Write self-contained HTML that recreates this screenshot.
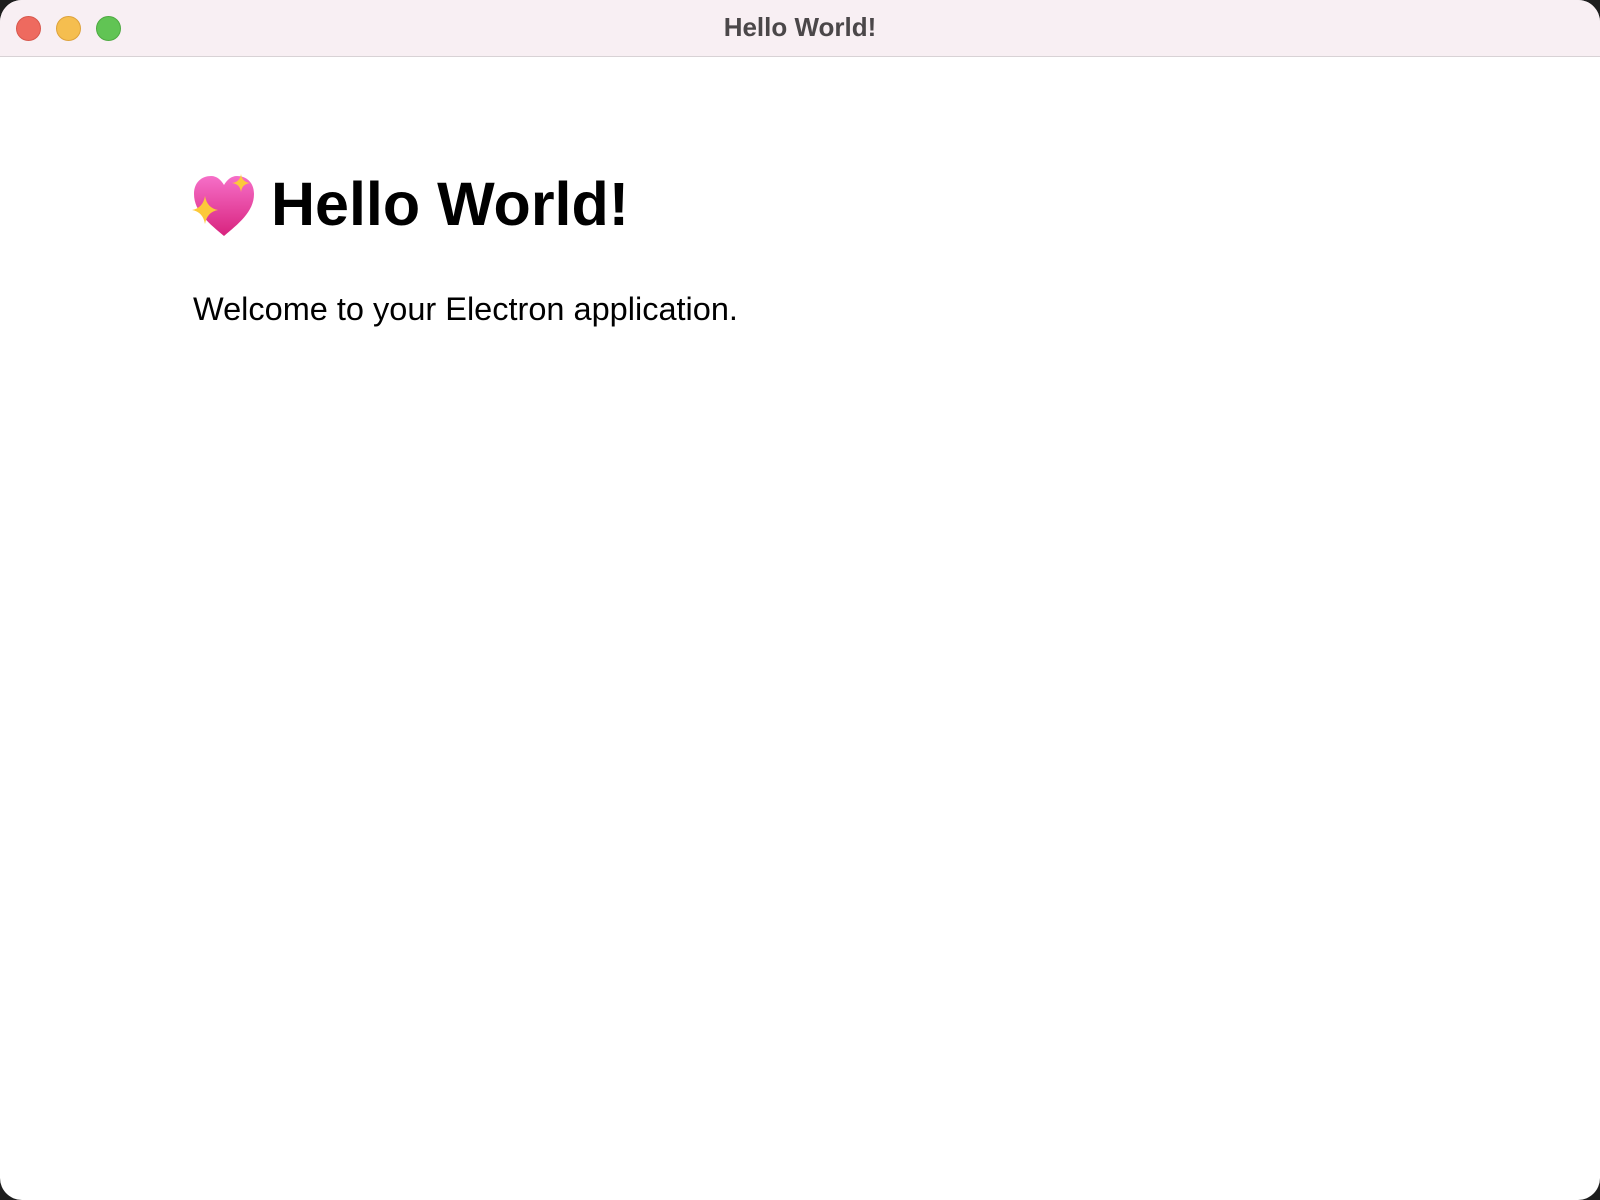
<!DOCTYPE html>
<html><head><meta charset="utf-8"><style>
html,body{margin:0;padding:0;background:#1e1e1e;}
.win{position:absolute;left:0;top:0;width:1600px;height:1200px;background:#fff;border-radius:22px;overflow:hidden;}
.bar{position:absolute;left:0;top:0;width:1600px;height:56px;background:#f8eff3;border-bottom:1px solid #d8d2d5;}
.dot{position:absolute;top:16px;width:23px;height:23px;border-radius:50%;}
.title{position:absolute;top:0;left:0;width:1600px;text-align:center;font:bold 26px/54px "Liberation Sans",sans-serif;color:#4b4749;}
h1{position:absolute;left:271px;top:169px;margin:0;font:bold 61px "Liberation Sans",sans-serif;color:#000;white-space:nowrap;}
p{position:absolute;left:193px;top:291px;margin:0;font:32.5px "Liberation Sans",sans-serif;color:#000;white-space:nowrap;}
svg.h{position:absolute;left:190px;top:172px;}
</style></head><body>
<div class="win">
<div class="bar">
<div class="dot" style="left:16px;background:#ee6a5f;border:0.5px solid #d8574c"></div>
<div class="dot" style="left:56px;background:#f5be4f;border:0.5px solid #dea23a"></div>
<div class="dot" style="left:96px;background:#61c454;border:0.5px solid #4eaa41"></div>
<div class="title">Hello World!</div>
</div>
<svg class="h" width="68" height="68" viewBox="0 0 68 68">
<defs><linearGradient id="g" x1="0" y1="0" x2="0" y2="1"><stop offset="0" stop-color="#f66fc8"/><stop offset="1" stop-color="#d8237e"/></linearGradient></defs>
<path d="M34 64 C20 52 4 40 4 22 C4 10 12 4 21 4 C27 4 31 8 34 13 C37 8 41 4 47 4 C56 4 64 10 64 22 C64 40 48 52 34 64Z" fill="url(#g)"/>
<path d="M15 24 Q17 36 28 38 Q17 40 15 52 Q13 40 2 38 Q13 36 15 24Z" fill="#fcc93a"/>
<path d="M51 2 Q52 10 60 11 Q52 12 51 20 Q50 12 42 11 Q50 10 51 2Z" fill="#fcc93a"/>
</svg>
<h1>Hello World!</h1>
<p>Welcome to your Electron application.</p>
</div>
</body></html>
